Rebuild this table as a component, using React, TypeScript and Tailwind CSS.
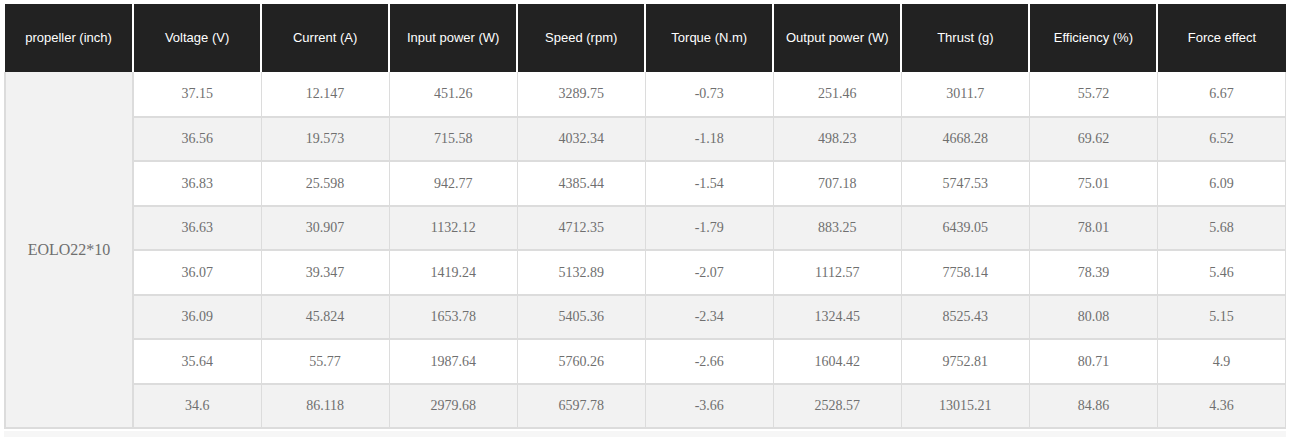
import React from "react";

const headers = [
  "propeller (inch)",
  "Voltage (V)",
  "Current (A)",
  "Input power (W)",
  "Speed (rpm)",
  "Torque (N.m)",
  "Output power (W)",
  "Thrust (g)",
  "Efficiency (%)",
  "Force effect",
];

const rows = [
  ["37.15", "12.147", "451.26", "3289.75", "-0.73", "251.46", "3011.7", "55.72", "6.67"],
  ["36.56", "19.573", "715.58", "4032.34", "-1.18", "498.23", "4668.28", "69.62", "6.52"],
  ["36.83", "25.598", "942.77", "4385.44", "-1.54", "707.18", "5747.53", "75.01", "6.09"],
  ["36.63", "30.907", "1132.12", "4712.35", "-1.79", "883.25", "6439.05", "78.01", "5.68"],
  ["36.07", "39.347", "1419.24", "5132.89", "-2.07", "1112.57", "7758.14", "78.39", "5.46"],
  ["36.09", "45.824", "1653.78", "5405.36", "-2.34", "1324.45", "8525.43", "80.08", "5.15"],
  ["35.64", "55.77", "1987.64", "5760.26", "-2.66", "1604.42", "9752.81", "80.71", "4.9"],
  ["34.6", "86.118", "2979.68", "6597.78", "-3.66", "2528.57", "13015.21", "84.86", "4.36"],
];

export default function App() {
  return (
    <div className="w-[1296px] h-[437px] bg-white pt-[4px] pl-[4px] overflow-hidden">
      <table className="w-[1282px] table-fixed border-collapse">
        <thead>
          <tr className="h-[68px] bg-[#222222]">
            {headers.map((h, i) => (
              <th
                key={h}
                className={`p-0 text-center align-middle text-[13px] font-normal text-white [font-family:'Liberation_Sans',Arial,sans-serif] ${
                  i < headers.length - 1 ? "border-r-2 border-white" : ""
                }`}
              >
                {h}
              </th>
            ))}
          </tr>
        </thead>
        <tbody className="[font-family:'Liberation_Serif','Times_New_Roman',serif] text-[14px] text-[#6f6f6f]">
          {rows.map((r, ri) => (
            <tr
              key={ri}
              className={`h-[44.5px] ${ri % 2 === 1 ? "bg-[#f2f2f2]" : "bg-white"}`}
            >
              {ri === 0 && (
                <td
                  rowSpan={rows.length}
                  className="p-0 text-center align-middle bg-[#f2f2f2] border-2 border-t-0 border-[#dcdcdc] text-[16px]"
                >
                  EOLO22*10
                </td>
              )}
              {r.map((c, ci) => (
                <td
                  key={ci}
                  className="p-0 text-center align-middle border-x border-b-2 border-[#dcdcdc]"
                >
                  {c}
                </td>
              ))}
            </tr>
          ))}
        </tbody>
      </table>
      <div className="w-[1282px] h-[8px] mt-[2px] bg-[#f6f6f6]" />
    </div>
  );
}
